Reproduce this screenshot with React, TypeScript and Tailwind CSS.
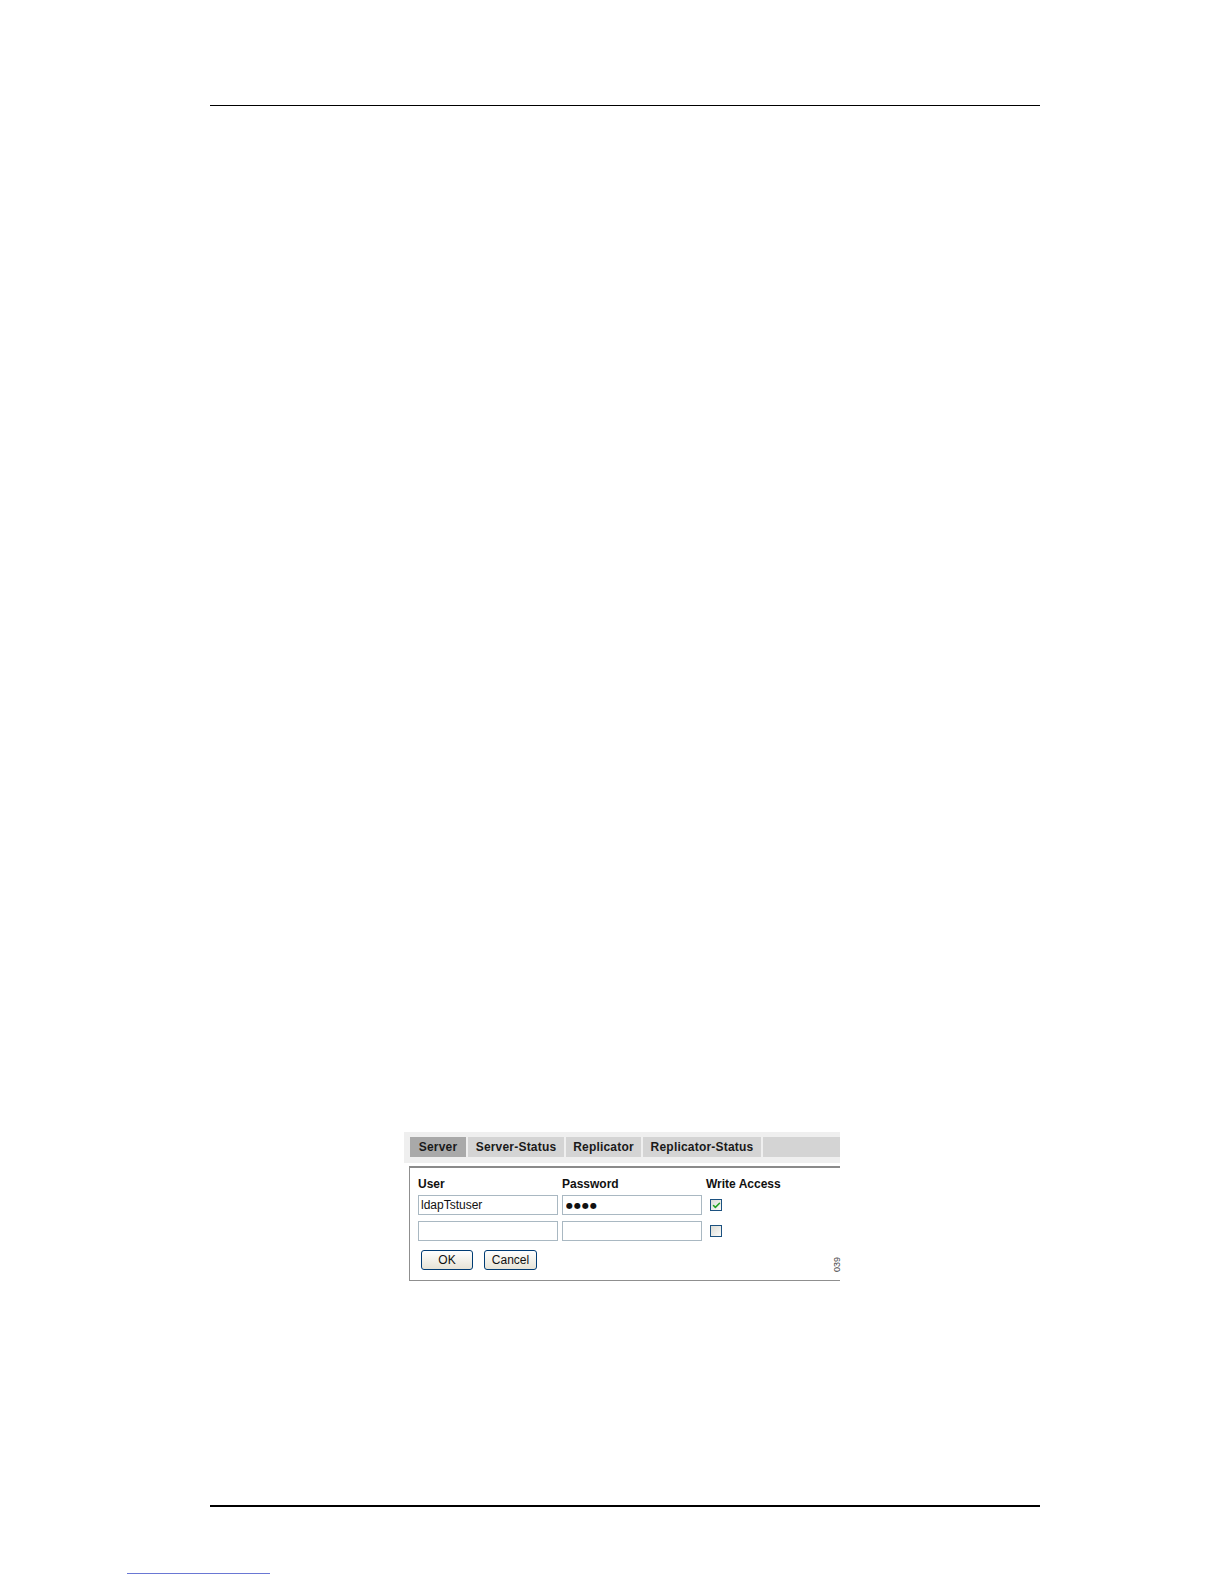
import { Check } from 'lucide-react';

const tabs = [
  { label: 'Server', w: 'w-[56px]', active: true },
  { label: 'Server-Status', w: 'w-[96px]', active: false },
  { label: 'Replicator', w: 'w-[75px]', active: false },
  { label: 'Replicator-Status', w: 'w-[118px]', active: false },
];

export default function App() {
  return (
    <div className="flex h-[1584px] w-[1224px] flex-col bg-white pt-[105px] font-['Liberation_Sans',Arial,sans-serif]">
      <div className="ml-[210px] h-px w-[830px] bg-black" />

      <div className="ml-[404px] mt-[1026px] w-[436px]">
        <TabBar />
        <Panel />
      </div>

      <div className="ml-[210px] mt-[224px] h-[2px] w-[830px] bg-black" />

      <div className="ml-[127px] mt-[66px] h-px w-[143px] bg-[#6a78d4]" />
    </div>
  );
}

function TabBar() {
  return (
    <div className="flex h-[31px] gap-[2px] bg-[#efefef] pl-[6px] pt-[5px] pb-[6px]">
      {tabs.map((tab) => (
        <div
          key={tab.label}
          className={`flex h-[20px] items-center justify-center text-[12px] font-bold tracking-[0.2px] text-[#1a1a1a] ${tab.w} ${
            tab.active ? 'bg-[#a9a9a9]' : 'bg-[#d4d4d4]'
          }`}
        >
          {tab.label}
        </div>
      ))}
      <div className="h-[20px] flex-1 bg-[#d4d4d4]" />
    </div>
  );
}

function Panel() {
  return (
    <div className="relative ml-[5px] mt-[3px] h-[115px] border-t-2 border-b border-l border-t-[#8a8a8a] border-b-[#8f8f8f] border-l-[#8f8f8f] bg-white pl-[8px] pt-[9px]">
      <div className="grid grid-cols-[140px_140px_auto] gap-x-[4px] text-[12px] leading-[14px]">
        <div className="font-bold text-[#111]">User</div>
        <div className="font-bold text-[#111]">Password</div>
        <div className="font-bold text-[#111]">Write Access</div>

        <input
          readOnly
          value="ldapTstuser"
          className="mt-[4px] h-[20px] border border-[#a9b8c2] px-[2px] text-[12px] text-[#111] outline-none"
        />
        <input
          readOnly
          value="●●●●"
          className="mt-[4px] h-[20px] border border-[#a9b8c2] px-[3px] font-['DejaVu_Sans',sans-serif] text-[8px] tracking-[1px] text-[#111] outline-none"
        />
        <div className="mt-[4px] flex h-[20px] items-center pl-[4px]">
          <Box checked />
        </div>

        <input readOnly value="" className="mt-[6px] h-[20px] border border-[#a9b8c2] outline-none" />
        <input readOnly value="" className="mt-[6px] h-[20px] border border-[#a9b8c2] outline-none" />
        <div className="mt-[6px] flex h-[20px] items-center pl-[4px]">
          <Box checked={false} />
        </div>
      </div>

      <div className="mt-[9px] flex gap-[11px] pl-[3px]">
        <XpButton label="OK" w="w-[52px]" />
        <XpButton label="Cancel" w="w-[53px]" />
      </div>

      <span className="absolute right-[-5px] top-[92px] -rotate-90 text-[9px] leading-none text-[#444]">
        039
      </span>
    </div>
  );
}

function Box(props: { checked: boolean }) {
  return (
    <div className="flex h-[12px] w-[12px] items-center justify-center border border-[#1c5180] bg-gradient-to-br from-[#dcdcd6] to-[#fbfbf9]">
      {props.checked && <Check className="h-[9px] w-[9px] text-[#21a121]" strokeWidth={4} aria-hidden="true" />}
    </div>
  );
}

function XpButton(props: { label: string; w: string }) {
  return (
    <div
      className={`flex h-[20px] items-center justify-center rounded-[3px] border border-[#003c74] bg-gradient-to-b from-white to-[#e6e3d6] text-[12px] text-[#111] ${props.w}`}
    >
      {props.label}
    </div>
  );
}
